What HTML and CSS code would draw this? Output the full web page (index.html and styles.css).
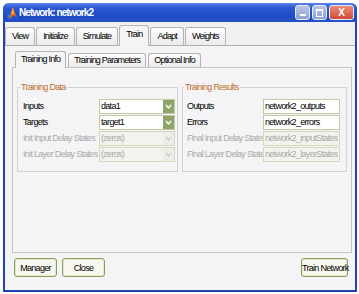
FILE: index.html
```html
<!DOCTYPE html>
<html lang="en">
<head>
  <meta charset="UTF-8" />
  <title>Network: network2</title>
  <link rel="stylesheet" href="styles.css">
</head>
<body>

  <div class="window">
    <div class="titlebar">
      <svg class="app-icon" viewBox="0 0 10 12">
        <polygon points="0,9 4,6 6,0 10,11 7,8 3,12" fill="#e8661a"/>
        <polygon points="4,6 6,0 7,8" fill="#f7b236"/>
        <polygon points="0,9 4,6 3,12" fill="#2c7fd0"/>
      </svg>
      <span class="title">Network: network2</span>
      <div class="controls">
        <span class="ctl"><i class="dash"></i></span>
        <span class="ctl"><i class="box"></i></span>
        <span class="ctl close">X</span>
      </div>
    </div>

    <div class="tabs outer-tabs">
      <div class="tab">View</div>
      <div class="tab">Initialize</div>
      <div class="tab">Simulate</div>
      <div class="tab active">Train</div>
      <div class="tab">Adapt</div>
      <div class="tab">Weights</div>
    </div>

    <div class="panel">
      <div class="tabs inner-tabs">
        <div class="tab active">Training Info</div>
        <div class="tab">Training Parameters</div>
        <div class="tab">Optional Info</div>
      </div>

      <div class="inner-panel">
        <div class="groups">
          <fieldset class="group left">
            <legend>Training Data</legend>
            <div class="fields">
              <label>Inputs</label>
              <div class="select"><span class="val">data1</span><span class="arrow"><svg viewBox="0 0 7 5"><polyline points="1,1 3.5,4 6,1"/></svg></span></div>
              <label>Targets</label>
              <div class="select"><span class="val">target1</span><span class="arrow"><svg viewBox="0 0 7 5"><polyline points="1,1 3.5,4 6,1"/></svg></span></div>
              <label class="off">Init Input Delay States</label>
              <div class="select off"><span class="val">(zeros)</span><span class="arrow"><svg viewBox="0 0 7 5"><polyline points="1,1 3.5,4 6,1"/></svg></span></div>
              <label class="off">Init Layer Delay States</label>
              <div class="select off"><span class="val">(zeros)</span><span class="arrow"><svg viewBox="0 0 7 5"><polyline points="1,1 3.5,4 6,1"/></svg></span></div>
            </div>
          </fieldset>

          <fieldset class="group right">
            <legend>Training Results</legend>
            <div class="fields">
              <label>Outputs</label>
              <div class="field">network2_outputs</div>
              <label>Errors</label>
              <div class="field">network2_errors</div>
              <label class="off">Final Input Delay States</label>
              <div class="field off">network2_inputStates</div>
              <label class="off">Final Layer Delay States</label>
              <div class="field off">network2_layerStates</div>
            </div>
          </fieldset>
        </div>
      </div>

      <div class="actions">
        <button class="btn">Manager</button>
        <button class="btn">Close</button>
        <button class="btn wide">Train Network</button>
      </div>
    </div>
  </div>

</body>
</html>
```

FILE: styles.css
```css
body {
  margin: 0;
  background: #fff;
  font-family: "Liberation Sans", Arial, sans-serif;
  font-size: 9px;
  letter-spacing: -0.7px;
  color: #000;
}
.window {
  margin: 3px 0 0 3px;
  width: 354px;
  height: 289px;
  box-sizing: border-box;
  border: 2px solid #2145b0;
  border-top: 0;
  border-radius: 6px 6px 0 0;
  background: #f0f0f2;
  display: flex;
  flex-direction: column;
}
.titlebar {
  height: 19px;
  margin: 0 -2px;
  padding: 0 3px 0 4px;
  border-radius: 6px 6px 0 0;
  background: linear-gradient(#5a86e8, #2a58d2 25%, #1f4cc4 70%, #2450c8);
  display: flex;
  align-items: center;
  color: #fff;
}
.app-icon {
  width: 10px;
  height: 12px;
}
.title {
  margin-left: 2px;
  font-weight: bold;
  font-size: 10px;
  letter-spacing: -0.9px;
}
.controls {
  margin-left: auto;
  display: flex;
  gap: 2px;
}
.ctl {
  width: 13px;
  height: 13px;
  border: 1px solid #e6ecf8;
  border-radius: 3px;
  background: linear-gradient(#b9c6e6, #8c9fd2);
  display: flex;
  align-items: center;
  justify-content: center;
}
.ctl .dash {
  width: 6px;
  height: 2px;
  margin-top: 5px;
  background: #fff;
}
.ctl .box {
  width: 5px;
  height: 5px;
  border: 1px solid #fff;
  border-top-width: 2px;
}
.ctl.close {
  width: 23px;
  background: linear-gradient(#ec8a7a, #d24a36);
  font-weight: bold;
  font-size: 10px;
  letter-spacing: 0;
}
.tabs {
  display: flex;
  align-items: flex-end;
}
.tab {
  box-sizing: border-box;
  border: 1px solid #b4b4b4;
  border-bottom: 0;
  border-radius: 3px 3px 0 0;
  background: linear-gradient(#fcfcfc, #ebebeb);
  white-space: nowrap;
}
.tab.active {
  position: relative;
  margin-bottom: -1px;
  background: #f4f4f6;
}
.outer-tabs {
  height: 23px;
  gap: 1px;
}
.outer-tabs .tab {
  height: 18px;
  line-height: 17px;
  padding: 0 6px;
  letter-spacing: -0.8px;
}
.outer-tabs .tab.active {
  height: 21px;
}
.panel {
  flex: 1;
  border-top: 1px solid #b0b0b0;
  padding: 5px 3px 0 7px;
  background: #f4f4f6;
}
.inner-tabs {
  height: 16px;
  margin-left: 3px;
  gap: 2px;
}
.inner-tabs .tab {
  height: 14px;
  line-height: 13px;
  padding: 0 5px;
  letter-spacing: -0.8px;
}
.inner-tabs .tab.active {
  height: 17px;
  line-height: 15px;
}
.inner-panel {
  height: 186px;
  box-sizing: border-box;
  border: 1px solid #c4c4c4;
  padding: 13px 4px 0;
}
.groups {
  display: grid;
  grid-template-columns: 161px 165px;
  gap: 4px;
}
.group {
  margin: 0;
  border: 1px solid #d2d2d2;
  padding: 6px 2px 9px 5px;
}
.group.right {
  padding: 6px 6px 9px 4px;
}
legend {
  margin-left: -3px;
  padding: 0 1px;
  color: #c0702e;
  line-height: 12px;
}
.fields {
  display: grid;
  grid-template-columns: 76px 1fr;
  grid-auto-rows: 15px;
  row-gap: 1px;
}
label {
  line-height: 15px;
  white-space: nowrap;
}
.off {
  color: #a9a9a9;
}
.select, .field {
  box-sizing: border-box;
  border: 1px solid #c0cba4;
  background: #fff;
  line-height: 13px;
  padding-left: 1px;
  white-space: nowrap;
  overflow: hidden;
}
.select {
  display: flex;
  padding-right: 0;
}
.select .val {
  flex: 1;
}
.select .arrow {
  width: 11px;
  background: #8ea46b;
  display: flex;
  align-items: center;
  justify-content: center;
}
.arrow svg {
  width: 7px;
  height: 5px;
  fill: none;
  stroke: #fff;
  stroke-width: 1.4;
}
.select.off, .field.off {
  background: #f2f3ee;
  border-color: #d2dabb;
}
.select.off .arrow {
  background: #eceee6;
}
.select.off .arrow svg {
  stroke: #c8c8c8;
}
.actions {
  display: flex;
  gap: 5px;
  margin-top: 5px;
  padding: 0 4px 0 2px;
}
.btn {
  width: 43px;
  height: 19px;
  padding: 0;
  border: 1px solid #86a05a;
  border-radius: 3px;
  background: #f7f7ef;
  box-shadow: inset 0 0 0 1px #e2e9cf;
  font: inherit;
  letter-spacing: inherit;
  color: #000;
}
.btn.wide {
  width: 47px;
  margin-left: auto;
  white-space: nowrap;
}
```
